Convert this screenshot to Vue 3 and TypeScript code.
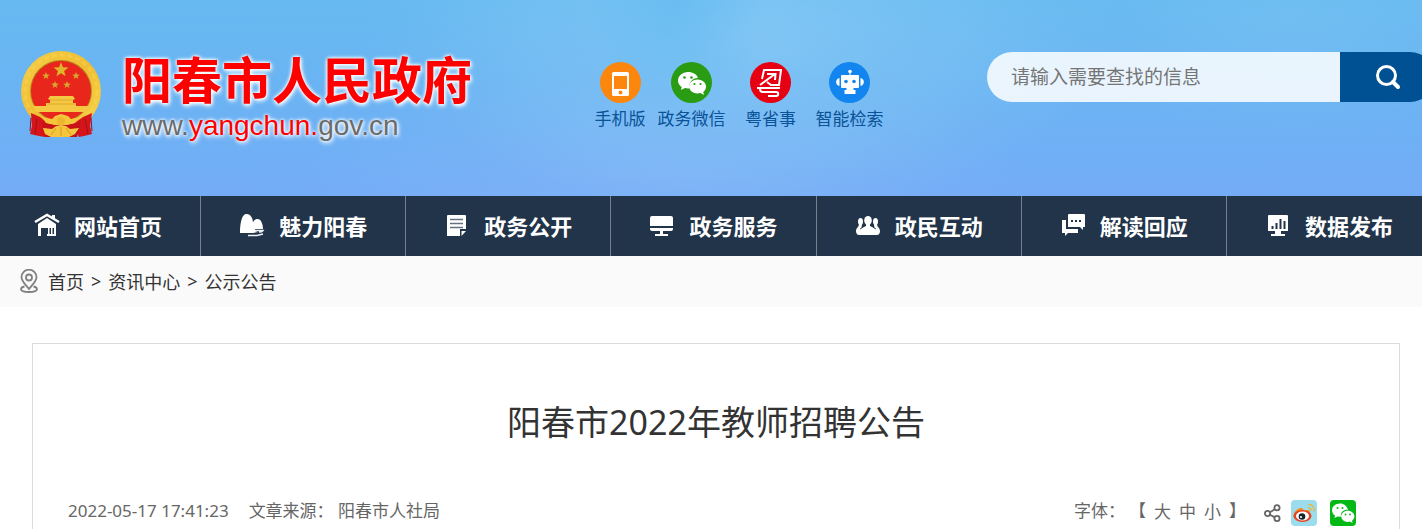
<script setup lang="ts">
import { ref } from 'vue'

interface NavItem {
  icon: string
  label: string
}

const keyword = ref('')
const fontSize = ref('中')
const sizes: string[] = ['大', '中', '小']

const quickLinks: NavItem[] = [
  { icon: 'phone', label: '手机版' },
  { icon: 'wechat', label: '政务微信' },
  { icon: 'yue', label: '粤省事' },
  { icon: 'robot', label: '智能检索' },
]

const navItems: NavItem[] = [
  { icon: 'home', label: '网站首页' },
  { icon: 'hill', label: '魅力阳春' },
  { icon: 'doc', label: '政务公开' },
  { icon: 'screen', label: '政务服务' },
  { icon: 'people', label: '政民互动' },
  { icon: 'chat', label: '解读回应' },
  { icon: 'chart', label: '数据发布' },
]
</script>

<template>
  <div class="page">
    <header class="banner">
      <a class="brand" href="#" aria-label="阳春市人民政府">
        <svg class="emblem" viewBox="0 0 82 90" aria-hidden="true">
          <defs>
            <linearGradient id="gold" x1="0" y1="0" x2="1" y2="1">
              <stop offset="0" stop-color="#f6cf45" />
              <stop offset=".5" stop-color="#efbd33" />
              <stop offset="1" stop-color="#f8d34a" />
            </linearGradient>
          </defs>
          <circle cx="41" cy="41" r="40" fill="url(#gold)" />
          <circle cx="41" cy="41" r="36" fill="none" stroke="#f9da5c" stroke-width="3" stroke-dasharray="5 3" opacity=".4" />
          <circle cx="41" cy="41" r="31" fill="#b98a1c" />
          <circle cx="41" cy="41" r="30" fill="#e8261c" />
          <path fill="#e0b52c" d="M41 12l1.9 5.3 5.6.2-4.4 3.4 1.5 5.4-4.6-3.1-4.6 3.1 1.5-5.4-4.4-3.4 5.6-.2z" />
          <g fill="#d9a52a">
            <path id="star" d="M26 22l1 2.6 2.8.1-2.2 1.7.8 2.7-2.4-1.5-2.4 1.5.8-2.7-2.2-1.7 2.8-.1z" />
            <use href="#star" x="30" />
            <use href="#star" x="9" y="9" />
            <use href="#star" x="21" y="9" />
          </g>
          <path fill="#f4c842" d="M30 46h23l2 3-2 1v3h3v3h12l-2 6H16l-3-6h13v-3h4v-3l-2-1z" />
          <path d="M30 50h23M27 54h29" stroke="#e0a92c" stroke-width="1" />
          <path fill="#d4161b" d="M11 63l9 4 9 7-2 7-2 6-6-1-9-2 2-8zM72 63l-9 4-10 7 3 7 3 6 5-1 8-2-2-8z" />
          <path fill="#c81218" d="M22 72l19 4 20-4-4 15H25z" />
          <path d="M11 68l-1 13M17 69l-2 15M71 68l1 13M65 69l3 15" stroke="#a90d14" stroke-width="1" />
          <path fill="#f5c63c" d="M22 67l10 2 3-3 6-2 7 2 3 3 9-2-5 6-9 2-5-3-6 3-9-2z" />
          <path fill="#f5c63c" d="M23 78l9 1 4-3h10l4 3 9-1-4 6-6 3H31l-6-3z" />
          <circle cx="41" cy="71" r="4" fill="#eeb52e" />
          <path d="M31 85l5-7M41 86v-9M51 85l-5-7" stroke="#d79a22" stroke-width="1" />
        </svg>
        <span class="brand-text">
          <span class="brand-name">阳春市人民政府</span>
          <span class="brand-url">www.<em>yangchun.</em>gov.cn</span>
        </span>
      </a>

      <nav class="quick" aria-label="快捷入口">
        <a v-for="q in quickLinks" :key="q.icon" href="#">
          <svg v-if="q.icon === 'phone'" viewBox="0 0 41 41" aria-hidden="true">
            <circle cx="20.500" cy="20.500" r="20.500" fill="#fd860d" />
            <path fill="#fff" fill-rule="evenodd" d="M13.500 10h14a1.500 1.500 0 0 1 1.500 1.500v21a1.500 1.500 0 0 1-1.500 1.500h-14a1.500 1.500 0 0 1-1.500-1.500v-21a1.500 1.500 0 0 1 1.500-1.500zm.5 4v13h13V14z" />
            <circle cx="20.500" cy="30.500" r="2" fill="#fd860d" />
          </svg>
          <svg v-else-if="q.icon === 'wechat'" viewBox="0 0 41 41" aria-hidden="true">
            <circle cx="20.500" cy="20.500" r="20.500" fill="#299c14" />
            <path fill="#fff" d="M17 10c-5.500 0-10 3.700-10 8.500 0 2.800 1.400 5 3.700 6.500L10 28l4-2 3 .5 2-.2c-2-6 3-10.500 8-10.300C26 12.500 22 10 17 10z" />
            <path fill="#fff" d="M26.500 17.500c-4.600 0-8.300 3.200-8.300 7s3.700 7 8.300 7l3-.5 3.500 2-.8-3c1.800-1.300 2.800-3.300 2.800-5.500 0-3.800-3.900-7-8.500-7z" />
            <g fill="#299c14"><circle cx="13.500" cy="15.500" r="1.300" /><circle cx="20.500" cy="15.500" r="1.300" /><circle cx="23.500" cy="22" r="1.100" /><circle cx="29.500" cy="22" r="1.100" /></g>
          </svg>
          <svg v-else-if="q.icon === 'yue'" viewBox="0 0 41 41" aria-hidden="true">
            <circle cx="20.500" cy="20.500" r="20.500" fill="#e60012" />
            <g fill="none" stroke="#fff" stroke-width="2">
              <path d="M12 17l2-9h17l-2 15h-9" />
              <path d="M10 23L25 12M17 12h8.500L25 18M17 20l4 3" />
              <path d="M7 26h23M10 27c0 2 1 3 3 3h13c3 0 3 4 0 4h-8" />
            </g>
          </svg>
          <svg v-else viewBox="0 0 41 41" aria-hidden="true">
            <circle cx="20.500" cy="20.500" r="20.500" fill="#1285ee" />
            <g fill="#fff">
              <circle cx="21" cy="9.500" r="1.800" /><path d="M20.500 10h1v4h-1z" />
              <rect x="12" y="13" width="18" height="13" rx="1" />
              <path d="M10.500 16v8C6 23 6 17 10.500 16zM31.500 16v8c4.500-1 4.500-7 0-8zM17.500 26h7v2h2v4h-11v-4h2z" />
            </g>
            <circle cx="17" cy="19.500" r="1.800" fill="#1285ee" /><circle cx="25" cy="19.500" r="1.800" fill="#1285ee" />
          </svg>
          <span>{{ q.label }}</span>
        </a>
      </nav>

      <form class="search" role="search" @submit.prevent>
        <input v-model="keyword" type="text" aria-label="搜索" placeholder="请输入需要查找的信息" />
        <button type="submit" aria-label="搜索">
          <svg viewBox="0 0 26 26" aria-hidden="true">
            <circle cx="11.500" cy="11.500" r="9" fill="none" stroke="#fff" stroke-width="3" />
            <path d="M18 18l5 5" stroke="#fff" stroke-width="4" stroke-linecap="round" />
          </svg>
        </button>
      </form>
    </header>

    <nav class="main-nav" aria-label="主导航">
      <a v-for="n in navItems" :key="n.icon" href="#">
        <svg viewBox="0 0 26 26" aria-hidden="true">
          <template v-if="n.icon === 'home'">
            <path d="M1 10L13 3l12 7" fill="none" stroke="#fff" stroke-width="2.500" />
            <path fill="#fff" d="M18 3h3v4l-3-2zM4 12l9-6 9 6v12h-2v-8h-1.500v7H17v-7h-1.500v7H14v-7H7v8H4zM13 22h8v2h-8z" />
          </template>
          <template v-else-if="n.icon === 'hill'">
            <path fill="#fff" d="M1 21C1 10 3 2 7.500 2S14 7 14 10.500C15 8 16.500 7 18.500 7c3.500 0 5.500 5 5.500 10h-8v2l3 1-5 1z" />
            <path d="M16 18.500h8c-1 1.500-3 1.500-4 1.500M9 23.500h9l6-1.500" fill="none" stroke="#eef1f4" stroke-width="1.500" />
          </template>
          <template v-else-if="n.icon === 'doc'">
            <path fill="#fff" d="M4 3h17a1 1 0 0 1 1 1v13h-6v7H3V4a1 1 0 0 1 1-1zM17.500 19H22l-4.500 5z" />
            <path d="M6 7.500h13M6 11.500h13M6 15.500h13" stroke="#65717f" stroke-width="1.500" />
          </template>
          <template v-else-if="n.icon === 'screen'">
            <path fill="#fff" d="M3 4h19a2 2 0 0 1 2 2v8H1V6a2 2 0 0 1 2-2zM1 16h23v1a2 2 0 0 1-2 2h-8v3h5v2H6v-2h5v-3H3a2 2 0 0 1-2-2z" />
          </template>
          <template v-else-if="n.icon === 'people'">
            <g fill="#fff">
              <ellipse cx="13" cy="8.500" rx="3.800" ry="4.500" /><ellipse cx="5.500" cy="9.500" rx="2.500" ry="3.500" /><ellipse cx="20.500" cy="9.500" rx="2.500" ry="3.500" />
              <path d="M4 12h3c0 3-1 3 0 4l4-2v-3h4v3l4 2c1-1 0-1 0-4h3c0 3 3 4 3 7 0 2-1 4-3 4H4c-2 0-3-2-3-4 0-3 3-4 3-7z" />
            </g>
            <path d="M8 12c1 3-1 4-3 5M18 12c-1 3 1 4 3 5" fill="none" stroke="#223449" stroke-width="1" />
          </template>
          <template v-else-if="n.icon === 'chat'">
            <path fill="#fff" d="M9 2h15a1 1 0 0 1 1 1v12h-2v3l-3-3H8V3a1 1 0 0 1 1-1zM2 8h4v9h12v4H8l-3 3v-3H2z" />
            <g fill="#223449"><path d="M11 8h2v2h-2zM15 8h2v2h-2zM19 8h2v2h-2z" /></g>
          </template>
          <template v-else>
            <path fill="#fff" d="M4 3h18a1 1 0 0 1 1 1v15H3V4a1 1 0 0 1 1-1zM10 19h6v3h4v2H6v-2h4z" />
            <path d="M7.500 17v-3M11.500 17v-6M15.500 17V7M19.500 17V9" stroke="#223449" stroke-width="2" />
          </template>
        </svg>
        <span>{{ n.label }}</span>
      </a>
    </nav>

    <nav class="crumbs" aria-label="当前位置">
      <svg viewBox="0 0 18 24" aria-hidden="true">
        <g fill="none" stroke="#808080" stroke-width="1.800">
          <path d="M9 20C5 15 1.500 12 1.500 8.200a7.500 7.500 0 0 1 15 0C16.500 12 13 15 9 20z" />
          <circle cx="9" cy="8.500" r="3" />
          <path d="M4.500 17.500C2 18 1 19 1 20.300 1 22 4 23 9 23s8-1 8-2.700c0-1.300-1-2.300-3.500-2.800" />
        </g>
      </svg>
      <a href="#">首页</a><span>&gt;</span><a href="#">资讯中心</a><span>&gt;</span><a href="#">公示公告</a>
    </nav>

    <main class="article">
      <h1>阳春市2022年教师招聘公告</h1>
      <div class="meta">
        <p class="source"><time datetime="2022-05-17T17:41:23">2022-05-17 17:41:23</time><span>文章来源： 阳春市人社局</span></p>
        <div class="tools">
          <div class="sizes" role="group" aria-label="字体">
            <span>字体：</span><span>【</span>
            <button v-for="s in sizes" :key="s" type="button" :aria-pressed="fontSize === s" @click="fontSize = s">{{ s }}</button>
            <span>】</span>
          </div>
          <div class="share">
            <a class="nodes" href="#" aria-label="分享">
              <svg viewBox="0 0 17 18" aria-hidden="true">
                <g fill="none" stroke="#666" stroke-width="1.800">
                  <circle cx="3.500" cy="9.500" r="2.600" /><circle cx="13" cy="3.800" r="2.600" /><circle cx="13" cy="14.500" r="2.600" />
                  <path d="M6 8.200l4.800-3M6 10.800l4.800 2.600" />
                </g>
              </svg>
            </a>
            <a href="#" aria-label="新浪微博">
              <svg viewBox="0 0 26 26" aria-hidden="true">
                <rect width="26" height="26" rx="4" fill="#9bdcee" />
                <path fill="#f58a13" d="M2.500 17c0-5 3-8 7-9 2-.5 3 1 3 3 4-2 7-1 6 2 2 1 2 3 1 5z" />
                <ellipse cx="11.500" cy="16" rx="9" ry="6" fill="#e6421f" />
                <ellipse cx="11.500" cy="16" rx="6.500" ry="4.500" fill="#fff" />
                <circle cx="11" cy="16.500" r="3.300" fill="#16242b" /><circle cx="10" cy="17" r="1.100" fill="#fff" />
                <path d="M17 4.500c4-.5 7 3 6 7M17 8c2-.3 3.300 1 3 3" fill="none" stroke="#e0bd4a" stroke-width="1.500" />
              </svg>
            </a>
            <a href="#" aria-label="微信">
              <svg viewBox="0 0 26 26" aria-hidden="true">
                <rect width="26" height="26" rx="4" fill="#04b916" />
                <path fill="#fff" d="M10 3.500c-4.500 0-8 3-8 6.700 0 2.300 1.200 4 3 5.200L4.500 18l3-1.500 3.500.3c-1-4.600 3-7.400 7-7C17 6 14 3.500 10 3.500z" />
                <path fill="#fff" d="M17.800 10.700c-3.700 0-6.600 2.500-6.600 5.600s2.900 5.600 6.600 5.600l2.200-.3 2.600 1.400-.6-2.300c1.500-1 2.400-2.600 2.400-4.400 0-3.100-2.900-5.600-6.600-5.600z" />
                <g fill="#04b916"><circle cx="7.500" cy="8" r="1" /><circle cx="12.500" cy="8" r="1" /><circle cx="15.500" cy="14.500" r=".9" /><circle cx="20" cy="14.500" r=".9" /></g>
              </svg>
            </a>
          </div>
        </div>
      </div>
    </main>
  </div>
</template>

<style>
body {
  margin: 0;
  background: #fff;
}
</style>

<style scoped>
.page {
  display: flex;
  flex-direction: column;
  min-height: 100vh;
  overflow: hidden;
  font-family: "Noto Sans", "Noto Sans CJK SC", sans-serif;
  color: #333;
}
a {
  color: inherit;
  text-decoration: none;
}
svg {
  display: block;
  flex: none;
}
.banner {
  display: flex;
  justify-content: space-between;
  align-items: flex-start;
  box-sizing: border-box;
  min-height: 196px;
  padding: 50px 0 0 20px;
  margin-right: -13px;
  background:
    radial-gradient(ellipse 90px 120px at 47% 0, rgba(90, 182, 240, 0.5), transparent),
    radial-gradient(ellipse 380px 170px at 52% 18%, rgba(145, 208, 245, 0.6), transparent),
    radial-gradient(ellipse 260px 120px at 90% 10%, rgba(130, 200, 243, 0.35), transparent),
    radial-gradient(ellipse 360px 110px at 46% 90%, rgba(140, 188, 248, 0.45), transparent),
    linear-gradient(#66b9f1, #6bb3f3 50%, #74acf6);
}
.brand {
  display: flex;
  gap: 20px;
  min-width: 470px;
}
.emblem {
  width: 82px;
  height: 90px;
}
.brand-text {
  display: flex;
  flex-direction: column;
  gap: 6px;
  text-shadow: 0 0 3px #fff, 0 0 4px #fff, 1px 2px 5px #fff;
}
.brand-name {
  font: bold 50px/54px "Noto Sans CJK SC", sans-serif;
  color: #fe0000;
}
.brand-url {
  font: 28px/32px "Liberation Sans", Arial, sans-serif;
  color: #6b6b6b;
}
.brand-url em {
  font-style: normal;
  color: #fe0000;
}
.quick {
  display: grid;
  grid-template-columns: 64px 79px 79px 79px;
  padding-top: 12px;
}
.quick a {
  display: flex;
  flex-direction: column;
  align-items: center;
  gap: 4px;
  font-size: 17px;
  line-height: 24px;
  white-space: nowrap;
  color: #0a5397;
}
.quick svg {
  width: 41px;
  height: 41px;
}
.search {
  display: flex;
  width: 448px;
  height: 50px;
  margin-top: 2px;
  border-radius: 25px;
  overflow: hidden;
}
.search input {
  flex: 1;
  min-width: 0;
  padding: 0 24px;
  border: 0;
  border-radius: 0;
  outline: 0;
  background: rgba(255, 255, 255, 0.85);
  font: 19px "Noto Sans", "Noto Sans CJK SC", sans-serif;
  color: #333;
}
.search input::placeholder {
  color: #757575;
}
.search button {
  display: flex;
  align-items: center;
  justify-content: center;
  width: 95px;
  padding: 0;
  border: 0;
  background: #005193;
  cursor: pointer;
}
.search svg {
  width: 26px;
  height: 26px;
}
.main-nav {
  display: grid;
  grid-template-columns: repeat(7, 1fr);
  margin: 0 -10px 0 -4px;
  background: #223449;
}
.main-nav a {
  display: flex;
  align-items: center;
  justify-content: center;
  gap: 14px;
  box-sizing: border-box;
  height: 60px;
  padding-bottom: 3px;
  border-right: 1px solid #75818d;
  font-size: 22px;
  font-weight: bold;
  white-space: nowrap;
  color: #fff;
}
.main-nav svg {
  width: 26px;
  height: 26px;
}
.crumbs {
  display: flex;
  align-items: center;
  gap: 7px;
  box-sizing: border-box;
  height: 51px;
  padding: 0 20px 2px;
  background: #fafafa;
  font-size: 18px;
}
.crumbs svg {
  width: 18px;
  height: 24px;
  margin-right: 3px;
}
.article {
  flex: 1;
  margin: 36px 22px 0 32px;
  padding-top: 52px;
  border: 1px solid #dcdcdc;
  border-bottom: 0;
}
h1 {
  margin: 0 0 50px;
  font-size: 34px;
  line-height: 52px;
  font-weight: normal;
  text-align: center;
}
.meta,
.tools,
.sizes,
.share,
.source {
  display: flex;
}
.meta {
  justify-content: space-between;
  padding: 0 43px 0 35px;
  font-size: 17px;
  line-height: 26px;
  color: #666;
}
.source {
  gap: 20px;
  margin: 0;
}
.tools {
  gap: 18px;
}
.sizes {
  gap: 8px;
}
.sizes span:first-child {
  margin-right: -4px;
}
.sizes button {
  display: block;
  padding: 0;
  border: 0;
  background: none;
  font: inherit;
  color: inherit;
  cursor: pointer;
}
.share {
  align-items: center;
  gap: 13px;
  padding-top: 2px;
}
.share svg {
  width: 26px;
  height: 26px;
}
.share .nodes {
  margin-right: -3px;
}
.share .nodes svg {
  width: 17px;
  height: 18px;
}
</style>
